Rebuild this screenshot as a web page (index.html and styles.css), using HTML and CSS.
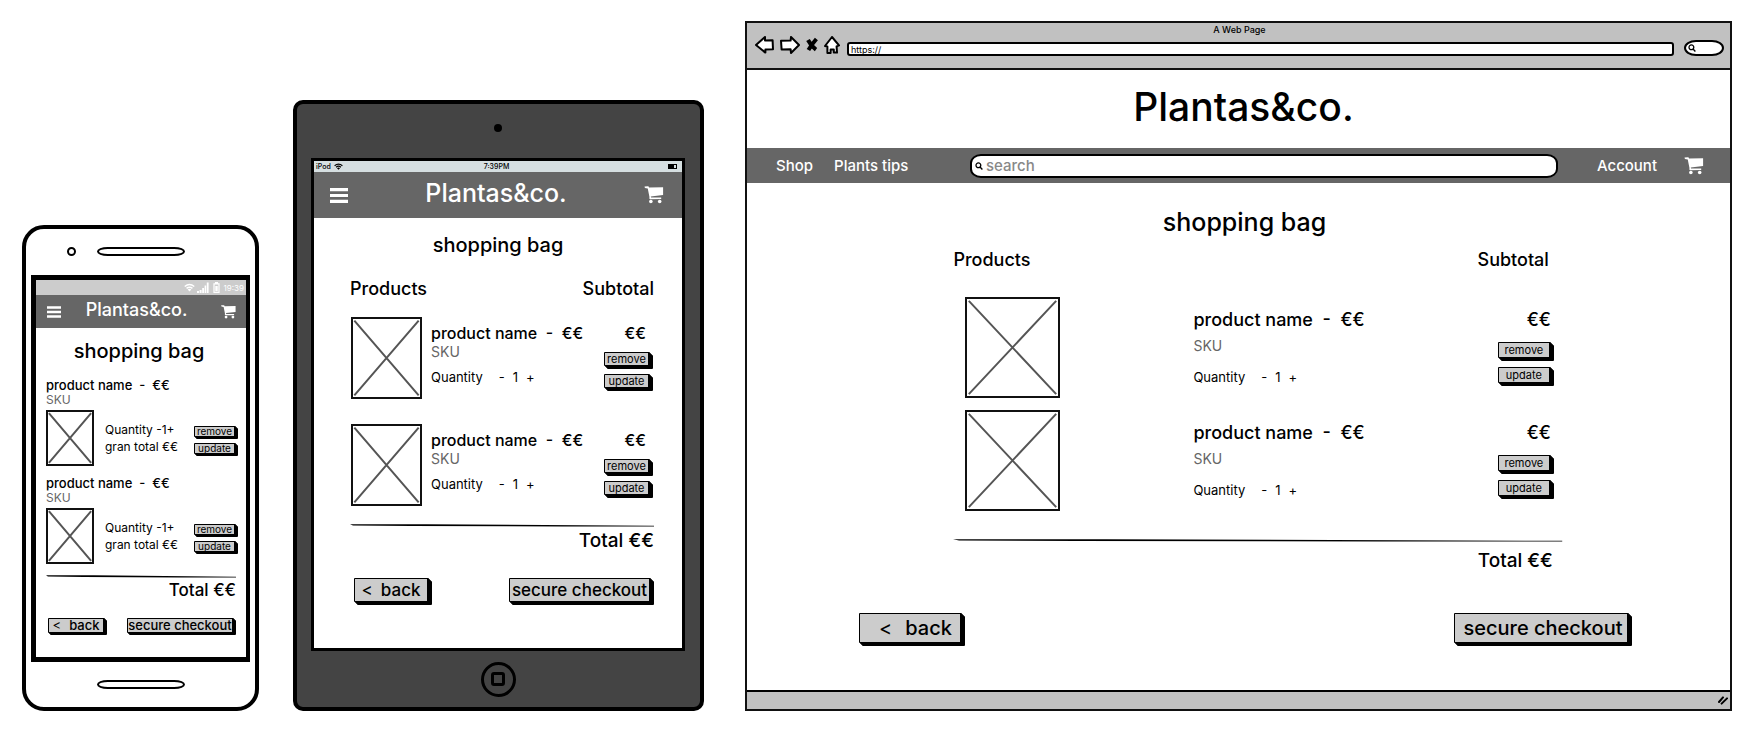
FILE: index.html
```html
<!DOCTYPE html>
<html lang="en">
<head>
<meta charset="utf-8">
<title>Plantas&amp;co. – shopping bag</title>
<link rel="stylesheet" href="styles.css">
</head>
<body>
<svg class="defs" aria-hidden="true">
  <symbol id="cart" viewBox="0 0 20 19"><path d="M0 0.5L3.6 0.3Q4.6 0.3 4.8 1.6L19.6 1.4V9.4L6.6 11L6.9 12.2L17.6 12.1V13.8L5.8 14Q4.6 13.6 5.2 11.6L3.4 2.6L0.4 2.2Z"/><circle cx="6.7" cy="16.4" r="1.9"/><circle cx="16" cy="16.4" r="1.9"/></symbol>
  <symbol id="menu" viewBox="0 0 18 15"><path d="M0 0H18V3.2H0ZM0 5.9H18V9.1H0ZM0 11.8H18V15H0Z"/></symbol>
  <symbol id="cross" viewBox="0 0 100 100" preserveAspectRatio="none"><path d="M2 2L98 98M98 2L2 98" fill="none" stroke="#555" stroke-width="2" vector-effect="non-scaling-stroke"/></symbol>
  <symbol id="rule" viewBox="0 0 600 3" preserveAspectRatio="none"><path d="M0 0.2L150 0.2L600 1.8V2.4L420 2.4L120 2L6 1.4Z"/></symbol>
  <symbol id="wifi" viewBox="0 0 12 9"><path d="M0.8 3.4Q6 -1 11.2 3.4M2.8 5.4Q6 2.8 9.2 5.4" fill="none" stroke="currentColor" stroke-width="1.6"/><path d="M4 6.7Q6 5.2 8 6.7L6 8.8Z"/></symbol>
  <symbol id="lens" viewBox="0 0 8 8"><circle cx="3.4" cy="3.3" r="2.4" fill="none" stroke="#000" stroke-width="1.3"/><path d="M5 5L7.4 7.4" stroke="#000" stroke-width="1.4"/></symbol>
</svg>
<main class="boards">

<section class="phone" aria-label="Phone">
  <div class="phone-top"><span class="phone-lens"></span><span class="speaker"></span></div>
  <div class="phone-screen">
    <div class="phone-status">
      <svg width="11" height="9"><use href="#wifi"/></svg>
      <svg width="12" height="11" viewBox="0 0 12 11"><path d="M0 9H2V11H0ZM2.6 8H4.6V11H2.6ZM5.2 6H7V11H5.2ZM7.6 3.4H9.2V11H7.6ZM9.8 0.6H11.6V11H9.8Z"/></svg>
      <svg class="phone-battery" width="7" height="11" viewBox="0 0 7 11"><path d="M2 0H5V1.2H6.6V11H0.4V1.2H2ZM1.6 2.4V9.8H5.4V2.4Z" fill-rule="evenodd"/><path d="M2.3 4H4.7V9.2H2.3Z"/></svg>
      <span>19:39</span>
    </div>
    <header class="appbar appbar-phone">
      <button class="plain" aria-label="Menu"><svg width="14" height="12"><use href="#menu"/></svg></button>
      <span class="brand">Plantas&amp;co.</span>
      <a href="#bag-phone" aria-label="Cart"><svg width="15" height="14"><use href="#cart"/></svg></a>
    </header>
    <div class="bag bag-phone" id="bag-phone">
      <h2>shopping bag</h2>
      <article class="p-item">
        <h3>product name&nbsp; -&nbsp; €€</h3>
        <p class="sku">SKU</p>
        <div class="p-row">
          <svg class="photo"><use href="#cross"/></svg>
          <div class="p-info"><p>Quantity -1+</p><p>gran total €€</p></div>
          <div class="p-actions"><button class="btn">remove</button><button class="btn">update</button></div>
        </div>
      </article>
      <article class="p-item">
        <h3>product name&nbsp; -&nbsp; €€</h3>
        <p class="sku">SKU</p>
        <div class="p-row">
          <svg class="photo"><use href="#cross"/></svg>
          <div class="p-info"><p>Quantity -1+</p><p>gran total €€</p></div>
          <div class="p-actions"><button class="btn">remove</button><button class="btn">update</button></div>
        </div>
      </article>
      <svg class="rule"><use href="#rule"/></svg>
      <p class="total">Total €€</p>
      <div class="nav-actions"><button class="btn back"><span class="chev">&lt;</span>back</button><button class="btn pay">secure checkout</button></div>
    </div>
  </div>
  <div class="phone-bottom"><span class="speaker"></span></div>
</section>

<section class="tablet" aria-label="Tablet">
  <div class="tablet-top"><span class="camera"></span></div>
  <div class="tablet-screen">
    <div class="tablet-status">
      <span class="carrier">iPod <svg width="9" height="7"><use href="#wifi"/></svg></span>
      <span>7:39PM</span>
      <span class="battery"><svg width="9" height="5" viewBox="0 0 9 5"><path d="M0 0H9V5H0ZM6 1V4H8V1Z" fill-rule="evenodd"/></svg></span>
    </div>
    <header class="appbar appbar-tablet">
      <button class="plain" aria-label="Menu"><svg width="18" height="15"><use href="#menu"/></svg></button>
      <span class="brand">Plantas&amp;co.</span>
      <a href="#bag-tablet" aria-label="Cart"><svg width="20" height="18"><use href="#cart"/></svg></a>
    </header>
    <div class="bag bag-tablet" id="bag-tablet">
      <h2>shopping bag</h2>
      <div class="cols"><span>Products</span><span>Subtotal</span></div>
      <article class="item">
        <svg class="photo"><use href="#cross"/></svg>
        <div class="info"><h3>product name&nbsp; -&nbsp; €€</h3><p class="sku">SKU</p>
          <p class="qty">Quantity <button class="plain">-</button><span>1</span><button class="plain">+</button></p></div>
        <div class="side"><p class="price">€€</p><button class="btn">remove</button><button class="btn">update</button></div>
      </article>
      <article class="item">
        <svg class="photo"><use href="#cross"/></svg>
        <div class="info"><h3>product name&nbsp; -&nbsp; €€</h3><p class="sku">SKU</p>
          <p class="qty">Quantity <button class="plain">-</button><span>1</span><button class="plain">+</button></p></div>
        <div class="side"><p class="price">€€</p><button class="btn">remove</button><button class="btn">update</button></div>
      </article>
      <svg class="rule"><use href="#rule"/></svg>
      <p class="total">Total €€</p>
      <div class="nav-actions"><button class="btn back"><span class="chev">&lt;</span>back</button><button class="btn pay">secure checkout</button></div>
    </div>
  </div>
  <div class="tablet-bottom"><button class="home" aria-label="Home"><span></span></button></div>
</section>

<section class="browser" aria-label="Browser">
  <div class="chrome">
    <p class="tab-title">A Web Page</p>
    <div class="toolbar">
      <button class="plain" aria-label="Back"><svg width="19" height="18" viewBox="0 0 19 18"><path d="M1 9L10 1V4.6L17.6 4.2L18 13.2L10.4 13.6V16.6Z"/></svg></button>
      <button class="plain" aria-label="Forward"><svg width="20" height="18" viewBox="0 0 20 18"><path d="M19 9L11 1L10.6 4.6L1 4.8L1.6 13.4L10.6 13.2L11 17Z"/></svg></button>
      <button class="plain" aria-label="Stop"><svg width="12" height="18" viewBox="0 0 12 18"><path class="stop" d="M2 4Q5 10 10 13.6M10.4 3Q6 8 2.4 14"/></svg></button>
      <button class="plain" aria-label="Home page"><svg width="16" height="18" viewBox="0 0 16 18"><path d="M8 1L15 9.4L12.6 10.4L13 16.6H9.8V13.6H6.6V17H3.4V10.4L1 10Z"/></svg></button>
      <input class="url" type="text" aria-label="Address" value="https://">
      <label class="web-search"><svg width="8" height="8"><use href="#lens"/></svg><input type="text" aria-label="Web search"></label>
    </div>
  </div>
  <h1 class="logo">Plantas&amp;co.</h1>
  <nav class="site-nav">
    <div class="links"><a href="#bag-web">Shop</a><a href="#bag-web">Plants tips</a></div>
    <label class="search"><svg width="8" height="8"><use href="#lens"/></svg><input type="text" placeholder="search" aria-label="Search"></label>
    <div class="links account"><a href="#bag-web">Account</a><a href="#bag-web" aria-label="Cart"><svg width="20" height="18"><use href="#cart"/></svg></a></div>
  </nav>
  <div class="bag bag-web" id="bag-web">
    <h2>shopping bag</h2>
    <div class="bag-body">
      <div class="cols"><span>Products</span><span>Subtotal</span></div>
      <article class="item">
        <svg class="photo"><use href="#cross"/></svg>
        <div class="info"><h3>product name&nbsp; -&nbsp; €€</h3><p class="sku">SKU</p>
          <p class="qty">Quantity <button class="plain">-</button><span>1</span><button class="plain">+</button></p></div>
        <div class="side"><p class="price">€€</p><button class="btn">remove</button><button class="btn">update</button></div>
      </article>
      <article class="item">
        <svg class="photo"><use href="#cross"/></svg>
        <div class="info"><h3>product name&nbsp; -&nbsp; €€</h3><p class="sku">SKU</p>
          <p class="qty">Quantity <button class="plain">-</button><span>1</span><button class="plain">+</button></p></div>
        <div class="side"><p class="price">€€</p><button class="btn">remove</button><button class="btn">update</button></div>
      </article>
      <svg class="rule"><use href="#rule"/></svg>
      <p class="total">Total €€</p>
    </div>
    <div class="nav-actions"><button class="btn back"><span class="chev">&lt;</span>back</button><button class="btn pay">secure checkout</button></div>
  </div>
  <div class="statusbar"><svg width="10" height="9" viewBox="0 0 10 9"><path d="M1 6L5 1.4M3.6 7.6L9 2.4" stroke="#000" stroke-width="2" stroke-linecap="round"/></svg></div>
</section>

</main>
</body>
</html>
```
FILE: styles.css
```css
* { box-sizing: border-box; }
body { margin: 0; background: #fff; color: #000; font-family: Inter, "Open Sans", sans-serif; font-size: 13px; }
h1, h2, h3, p { margin: 0; font-weight: 500; }
a { color: inherit; text-decoration: none; }
svg { display: block; fill: currentColor; flex: none; }
button, input { font: inherit; color: inherit; }
.defs { position: absolute; width: 0; height: 0; }
.plain { border: 0; padding: 0; background: none; }

.boards { display: grid; grid-template-columns: minmax(0, 237fr) 34px minmax(0, 411fr) 41px minmax(0, 987fr); align-items: end; padding: 21px 22px 19px; }

.btn { display: block; white-space: nowrap; padding: 0; border: 1px solid #000; border-right-width: 2px; border-radius: 1px; background: #ccc; box-shadow: 1px 1px #000, 2px 2px #000, 3px 3px #000; text-align: center; }
.photo { border: 2px solid #111; }
.sku { color: #666; font-weight: 400; }
.rule { width: 100%; height: 3px; }
.total { text-align: right; font-size: 19px; line-height: 20px; }
.nav-actions { display: flex; justify-content: space-between; font-weight: 500; }
.bag h2 { text-align: center; font-size: 20px; line-height: 24px; }
.appbar { display: flex; align-items: center; justify-content: space-between; background: #666; color: #fff; font-weight: 500; }

/* Phone */
.phone { grid-column: 1; border: 4px solid #000; border-radius: 22px; padding: 0 5px; }
.phone-top { display: flex; align-items: center; height: 46px; padding: 0 0 1px 36px; }
.phone-lens { width: 9px; height: 9px; border: 2px solid #000; border-radius: 50%; margin-right: 21px; }
.speaker { width: 88px; height: 9px; border: 2px solid #000; border-radius: 12px / 5px; }
.phone-screen { border: 5px solid #000; border-right-width: 4px; }
.phone-status { display: flex; align-items: center; justify-content: flex-end; gap: 2px; height: 15px; padding-right: 2px; background: #ccc; color: #fff; font-size: 8px; line-height: 12px; }
.phone-battery { margin: 0 2px; }
.appbar-phone { height: 33px; padding: 0 10px 0 11px; }
.appbar-phone .brand { font-size: 18px; line-height: 22px; padding: 0 9px 4px 0; }
.bag-phone { padding: 11px 10px 24px; }
.bag-phone h2 { margin-bottom: 14px; padding-right: 4px; }
.p-item { margin-bottom: 9px; }
.p-item h3 { font-size: 13px; line-height: 16px; }
.p-item .sku { font-size: 12px; line-height: 14px; margin-bottom: 3px; }
.p-row { display: flex; align-items: center; }
.p-row .photo { width: 48px; height: 56px; }
.p-info { flex: 1; margin-left: 11px; font-size: 12px; line-height: 17px; white-space: nowrap; }
.p-info p { font-weight: 400; }
.p-actions { display: grid; gap: 6px; width: 42px; margin-top: 4px; }
.p-actions .btn { height: 11px; font-size: 10px; line-height: 9px; box-shadow: 1px 1px #000, 2px 2px #000; }
.bag-phone .rule { margin-top: 11px; }
.bag-phone .total { margin-top: 2px; font-size: 17px; }
.bag-phone .nav-actions { margin-top: 18px; padding: 0 2px; }
.bag-phone .nav-actions .btn { height: 15px; font-size: 13px; line-height: 13px; box-shadow: 1px 1px #000, 2px 2px #000; }
.bag-phone .back { width: 57px; }
.bag-phone .pay { width: 107px; }
.chev { font-weight: 400; margin-right: 8px; }
.phone-bottom { display: flex; align-items: center; justify-content: center; height: 45px; }

/* Tablet */
.tablet { grid-column: 3; border: 4px solid #000; border-radius: 10px; padding: 0 15px 0 14px; background: #444; }
.tablet-top { display: flex; align-items: center; justify-content: center; height: 54px; padding-bottom: 6px; }
.camera { width: 8px; height: 8px; border-radius: 50%; background: #000; }
.tablet-screen { border: 3px solid #000; background: #fff; }
.tablet-status { display: grid; grid-template-columns: 1fr auto 1fr; align-items: center; height: 11px; padding: 0 5px 0 2px; background: #d6dfe1; font-size: 7px; font-weight: 500; line-height: 11px; }
.carrier { display: flex; align-items: center; gap: 3px; }
.battery { justify-self: end; }
.appbar-tablet { height: 46px; padding: 0 18px 0 16px; }
.appbar-tablet .brand { font-size: 25px; line-height: 28px; padding-bottom: 4px; }
.bag-tablet { padding: 15px 28px 46px 36px; }
.bag-tablet h2 { margin: 0 0 22px; padding-right: 8px; }
.cols { display: flex; justify-content: space-between; font-size: 18px; font-weight: 500; line-height: 20px; }
.bag-tablet .cols { margin-bottom: 18px; }
.item { display: grid; }
.bag-tablet .item { grid-template-columns: 71px 1fr 46px; column-gap: 9px; padding: 0 4px 0 1px; margin-bottom: 25px; }
.bag-tablet .photo { width: 71px; height: 82px; }
.bag-tablet .info, .bag-tablet .side { padding-top: 6px; }
.item h3 { font-size: 16px; line-height: 20px; white-space: nowrap; }
.item .sku { font-size: 14px; line-height: 18px; }
.qty { display: flex; font-size: 13px; font-weight: 400; line-height: 18px; }
.bag-tablet .qty { margin-top: 7px; }
.qty button { margin-left: 16px; }
.qty span { margin-left: 8px; }
.qty span + button { margin-left: 8px; }
.price { font-size: 16px; line-height: 20px; text-align: right; }
.bag-tablet .price { padding-right: 4px; margin-bottom: 9px; }
.side .btn { width: 100%; font-size: 11px; }
.bag-tablet .side .btn { height: 14px; line-height: 12px; margin-bottom: 8px; }
.bag-tablet .rule { margin-top: -7px; }
.bag-tablet .total { margin-top: 4px; }
.bag-tablet .nav-actions { margin-top: 27px; padding: 0 3px 0 4px; }
.bag-tablet .nav-actions .btn { height: 24px; font-size: 17px; line-height: 21px; }
.bag-tablet .back { width: 75px; }
.bag-tablet .pay { width: 142px; }
.tablet-bottom { display: flex; align-items: center; justify-content: center; height: 56px; }
.home { display: grid; place-items: center; width: 35px; height: 35px; padding: 0; border: 3px solid #000; border-radius: 50%; background: none; }
.home span { width: 14px; height: 14px; border: 3px solid #000; border-radius: 3px; }

/* Browser window */
.browser { grid-column: 5; border: 2px solid #111; }
.chrome { background: #c1c1c1; border-bottom: 2px solid #111; padding: 1px 6px 11px 8px; }
.tab-title { text-align: center; font-size: 9px; line-height: 12px; }
.toolbar { display: flex; align-items: flex-start; height: 21px; }
.toolbar button { margin-right: 6px; }
.toolbar button svg { fill: #fff; stroke: #000; stroke-width: 2; stroke-linejoin: round; }
.toolbar button .stop { stroke-width: 4; fill: none; }
.url { flex: 1; min-width: 0; height: 14px; margin: 6px 10px 0 1px; padding: 0 2px; border: 2px solid #000; border-radius: 3px; background: #fff; font-size: 9px; line-height: 10px; }
.web-search { display: flex; align-items: center; width: 40px; height: 16px; margin-top: 4px; padding: 0 2px; border: 2px solid #000; border-radius: 12px / 8px; background: #fff; }
.web-search input { width: 20px; height: 10px; padding: 0; border: 0; background: none; }
.logo { padding: 13px 0 17px 10px; text-align: center; font-size: 39px; line-height: 48px; }
.site-nav { display: grid; grid-template-columns: 194px 1fr 146px; align-items: center; height: 35px; padding: 0 26px 0 29px; background: #666; color: #fff; font-size: 15px; font-weight: 500; line-height: 20px; }
.links { display: flex; align-items: center; gap: 21px; }
.account { justify-content: flex-end; gap: 27px; }
.search { display: flex; align-items: center; height: 24px; padding: 0 3px; border: 2px solid #000; border-radius: 11px / 9px; background: #fff; color: #000; }
.search input { flex: 1; min-width: 0; border: 0; padding: 0 0 0 3px; background: none; outline: 0; line-height: 18px; }
.search input::placeholder { color: #888; opacity: 1; }
.bag-web { padding: 24px 0 47px; }
.bag-web h2 { font-size: 25px; line-height: 30px; margin-bottom: 13px; padding-left: 12px; }
.bag-body { padding: 0 17% 0 21%; }
.bag-web .cols { margin-bottom: 27px; padding-right: 14px; }
.bag-web .item { grid-template-columns: 228px 1fr 53px; padding: 0 12px; margin-bottom: 12px; }
.bag-web .photo { width: 95px; height: 101px; }
.bag-web .info { padding-top: 12px; }
.bag-web .info h3 { font-size: 18px; line-height: 22px; margin-bottom: 6px; }
.bag-web .qty { margin-top: 13px; }
.bag-web .side { padding-top: 13px; }
.bag-web .price { font-size: 18px; margin-bottom: 12px; }
.bag-web .side .btn { height: 16px; line-height: 14px; margin-bottom: 9px; }
.bag-web .rule { margin-top: 28px; }
.bag-web .total { margin-top: 9px; padding-right: 10px; }
.bag-web .nav-actions { margin-top: 42px; padding: 0 101px 0 112px; }
.bag-web .nav-actions .btn { height: 30px; font-size: 20px; line-height: 28px; }
.bag-web .back { width: 103px; padding-left: 11px; }
.bag-web .pay { width: 175px; padding-left: 4px; }
.bag-web .chev { margin-right: 13px; }
.statusbar { display: flex; justify-content: flex-end; align-items: center; height: 19px; padding-right: 2px; border-top: 2px solid #000; background: #c1c1c1; }
```
